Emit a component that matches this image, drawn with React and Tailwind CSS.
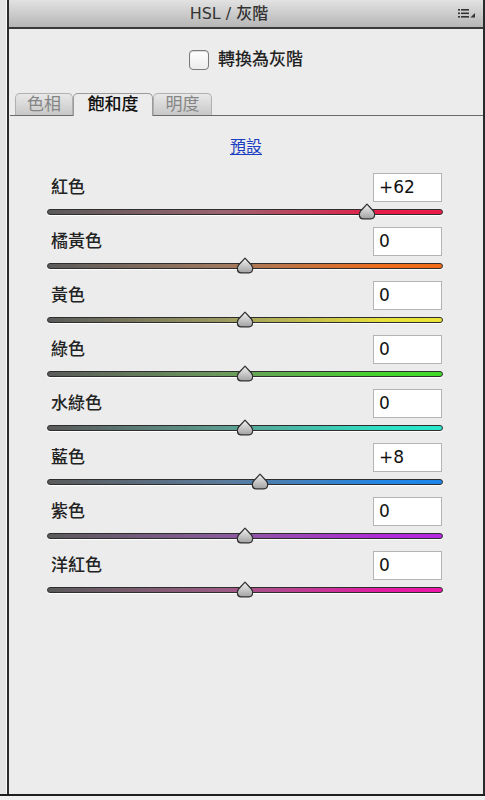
const rows = [
  { label: "紅色", value: 62, track: "bg-[linear-gradient(to_right,#5a5a5a,#9c6470_45%,#e81c48_85%,#ec1c48)]" },
  { label: "橘黃色", value: 0, track: "bg-[linear-gradient(to_right,#5a5a5a,#a07a60_45%,#ee6c1c_85%,#f06c18)]" },
  { label: "黃色", value: 0, track: "bg-[linear-gradient(to_right,#5a5a5a,#9c9a60_45%,#e6e03a_85%,#ece436)]" },
  { label: "綠色", value: 0, track: "bg-[linear-gradient(to_right,#5a5a5a,#6c9a5c_45%,#44d42c_85%,#40da28)]" },
  { label: "水綠色", value: 0, track: "bg-[linear-gradient(to_right,#5a5a5a,#5c9c90_45%,#2ee0c4_85%,#28e8cc)]" },
  { label: "藍色", value: 8, track: "bg-[linear-gradient(to_right,#5a5a5a,#5c7c9c_45%,#2286e4_85%,#1e86ea)]" },
  { label: "紫色", value: 0, track: "bg-[linear-gradient(to_right,#5a5a5a,#8a5c9c_45%,#b02cd8_85%,#b428e0)]" },
  { label: "洋紅色", value: 0, track: "bg-[linear-gradient(to_right,#5a5a5a,#9c5c84_45%,#e41ca4_85%,#ec18a8)]" },
];

const TRACK_W = 395;

function Thumb() {
  return (
    <svg width="18" height="17" viewBox="0 0 18 17">
      <defs>
        <linearGradient id="thumbFill" x1="0" y1="0" x2="0" y2="1">
          <stop offset="0" stopColor="#f2f2f2" />
          <stop offset="1" stopColor="#a2a2a2" />
        </linearGradient>
      </defs>
      <path
        d="M9 1.2 L15.4 8 Q17.1 10.1 16.5 13 Q15.9 15.7 13 15.8 L5 15.8 Q2.1 15.7 1.5 13 Q0.9 10.1 2.6 8 Z"
        fill="url(#thumbFill)"
        stroke="#2e2e2e"
        strokeWidth="1.2"
        strokeLinejoin="round"
      />
    </svg>
  );
}

function SliderRow({ label, value, track }) {
  const left = ((value + 100) / 200) * TRACK_W - 9;
  const text = value > 0 ? `+${value}` : `${value}`;
  return (
    <div className="h-[54px] flex flex-col">
      <div className="h-[29px] flex items-center justify-between">
        <span className="pl-[4px] text-[17px] leading-none font-medium text-[#222]">{label}</span>
        <div className="w-[69px] h-[29px] mr-[1px] bg-white border border-[#b4b4b4] flex items-center pl-[5px] text-[17px] text-[#111]">
          {text}
        </div>
      </div>
      <div className="relative h-[17px] mt-[1px] flex items-center">
        <div
          className={`w-full h-[6px] rounded-full border border-[#2e2e2e] shadow-[0_1px_0_#ffffff] ${track}`}
        />
        <div className="absolute top-0" style={{ left }}>
          <Thumb />
        </div>
      </div>
    </div>
  );
}

export default function App() {
  return (
    <div className="w-[485px] h-[800px] bg-[#f0f0f0] font-['DejaVu_Sans','Noto_Sans_CJK_TC',sans-serif]">
      <div className="h-[796px] flex border-b-2 border-[#1e1e1e]">
        <div className="w-[7px] bg-[#e4e4e4] border-r border-[#fafafa]" />
        <div className="flex-1 flex flex-col bg-[#ececec] border-l-2 border-r-2 border-[#2a2a2a]">
          <div className="h-[29px] shrink-0 relative flex items-center justify-center pr-[34px] border-b-2 border-[#3a3a3a] bg-[linear-gradient(to_bottom,#e2e2e2,#b6b6b6)]">
            <span className="text-[16px] font-medium text-[#333]">HSL / 灰階</span>
            <svg className="absolute right-[7px] top-[9px]" width="18" height="9" viewBox="0 0 18 9">
              <rect x="0" y="0" width="2" height="1.6" fill="#333" />
              <rect x="3" y="0" width="8" height="1.6" fill="#333" />
              <rect x="0" y="3.5" width="2" height="1.6" fill="#333" />
              <rect x="3" y="3.5" width="8" height="1.6" fill="#333" />
              <rect x="0" y="7" width="2" height="1.6" fill="#333" />
              <rect x="3" y="7" width="8" height="1.6" fill="#333" />
              <path d="M17 4 L17 8.6 L12.4 8.6 Z" fill="#333" />
            </svg>
          </div>

          <div className="h-[64px] shrink-0 flex justify-center pt-[21px]">
            <div className="flex items-center gap-[9px] h-[20px]">
              <div className="w-[20px] h-[20px] rounded-[4px] border border-[#7a7a7a] bg-[linear-gradient(to_bottom,#ffffff,#ececec)] shadow-[inset_0_1px_1px_rgba(0,0,0,0.15)]" />
              <span className="text-[17px] font-medium text-[#222]">轉換為灰階</span>
            </div>
          </div>

          <div className="h-[23px] shrink-0 ml-[1px] flex items-end border-b border-[#6a6a6a] pl-[5px]">
            <div className="w-[58px] h-[22px] rounded-t-[5px] border border-b-0 border-[#b0b0b0] bg-[linear-gradient(to_bottom,#e8e8e8,#c8c8c8)] flex items-center justify-center text-[17px] text-[#858585]">
              色相
            </div>
            <div className="w-[80px] h-[23px] -mb-[1px] rounded-t-[5px] border border-b-0 border-[#9a9a9a] bg-[#ececec] flex items-center justify-center text-[17px] font-medium text-[#111]">
              飽和度
            </div>
            <div className="w-[59px] h-[22px] rounded-t-[5px] border border-b-0 border-[#b0b0b0] bg-[linear-gradient(to_bottom,#e8e8e8,#c8c8c8)] flex items-center justify-center text-[17px] text-[#858585]">
              明度
            </div>
          </div>

          <div className="h-[57px] shrink-0 flex justify-center pt-[21px]">
            <span className="text-[16px] leading-[20px] text-[#1a3cc0] underline underline-offset-2">預設</span>
          </div>

          <div className="pl-[38px] pr-[40px] flex flex-col">
            {rows.map((r) => (
              <SliderRow key={r.label} {...r} />
            ))}
          </div>
        </div>
      </div>
    </div>
  );
}
